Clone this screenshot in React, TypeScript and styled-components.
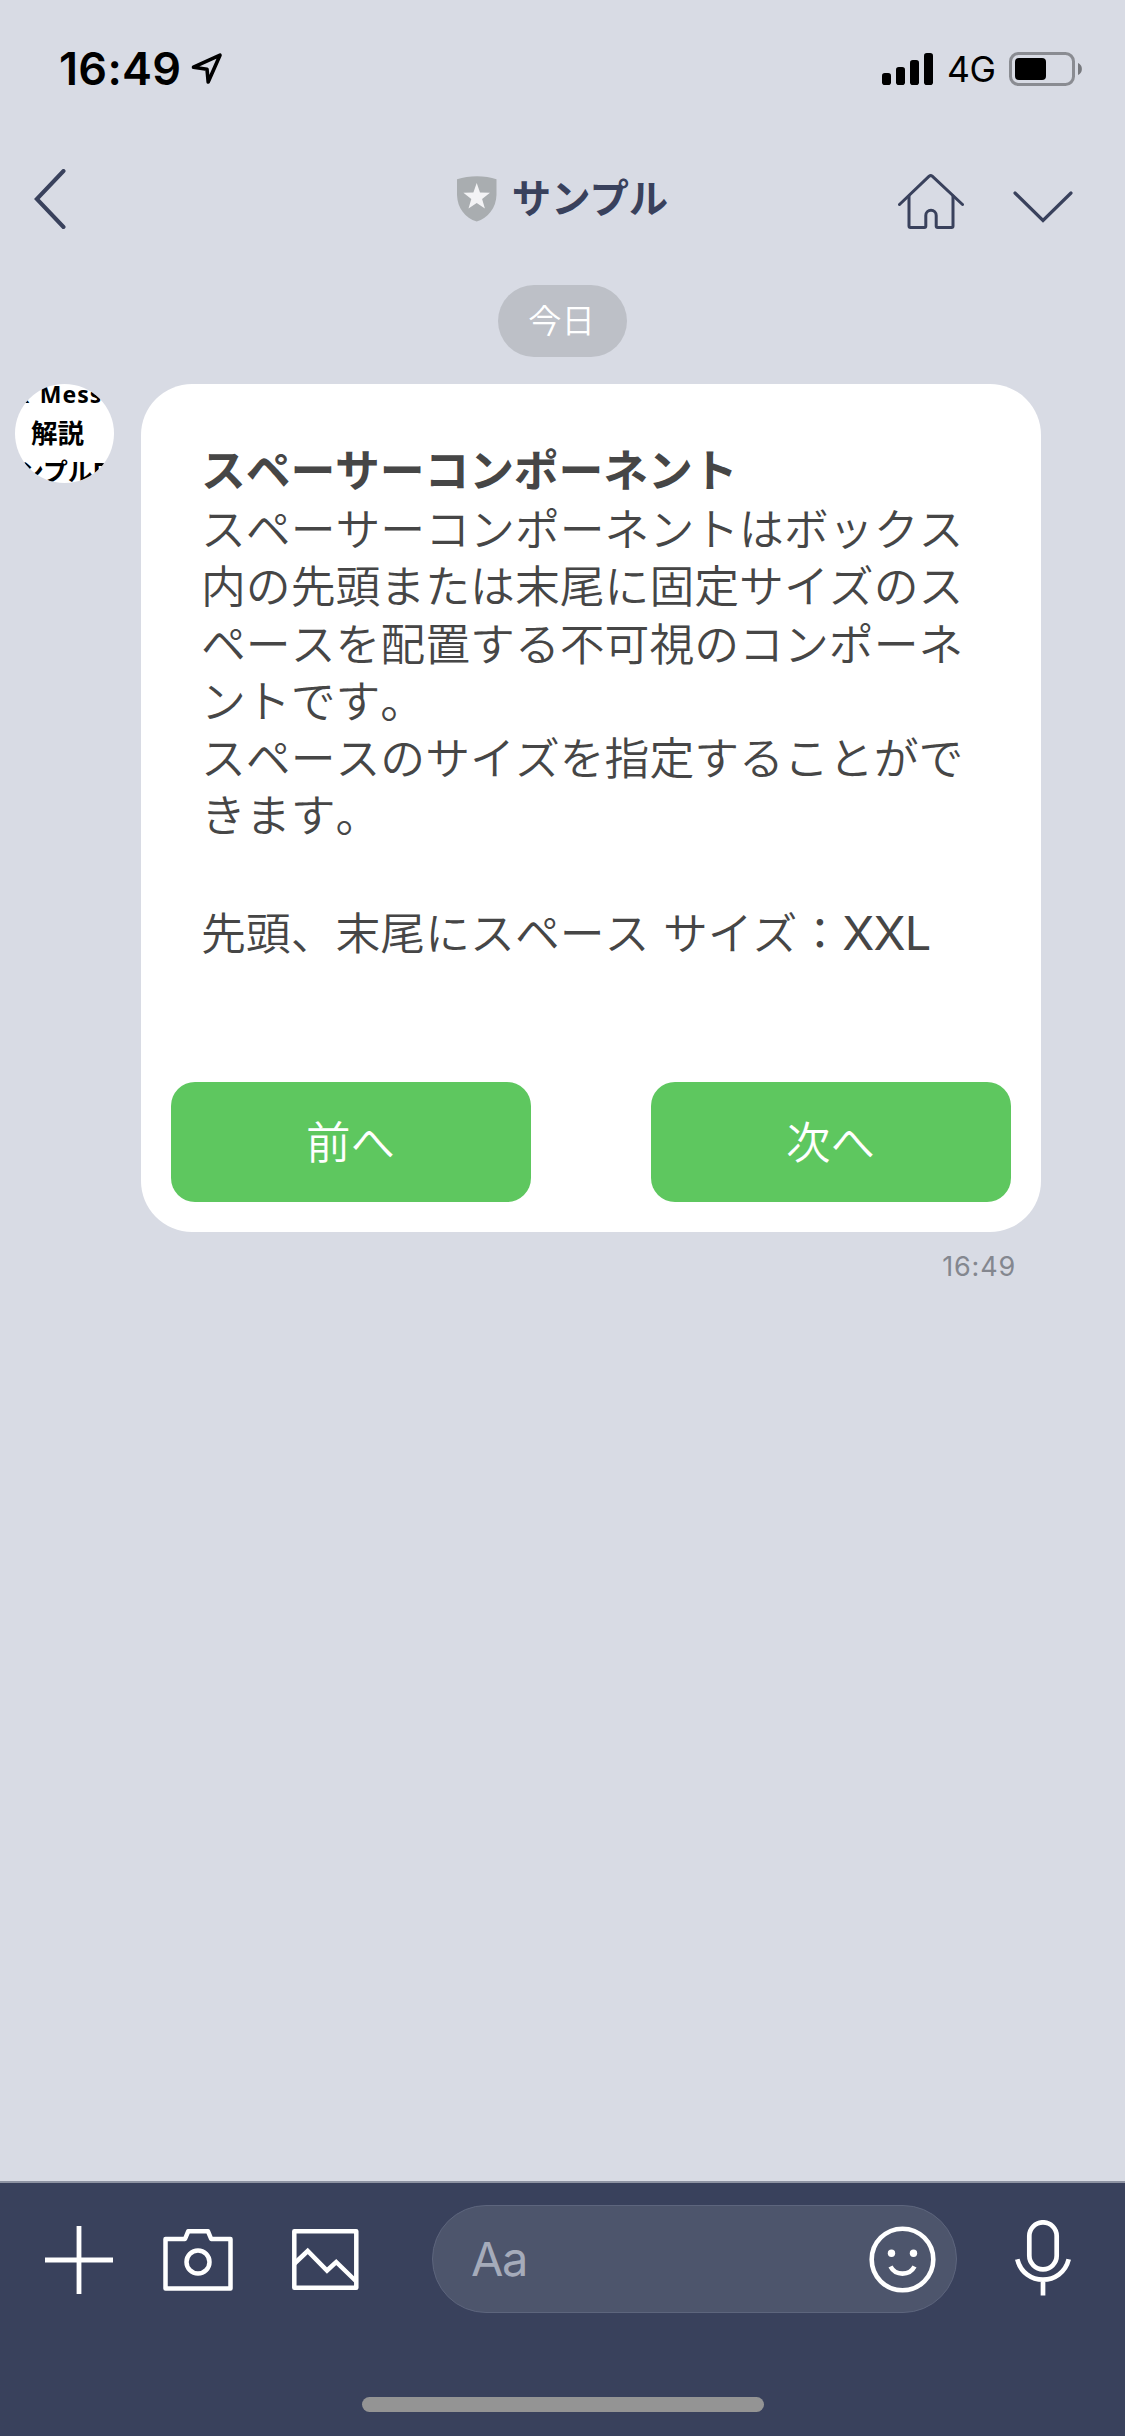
import React from "react";
import styled, { createGlobalStyle } from "styled-components";

const colors = {
  sky: "#d8dbe4",
  navy: "#39415c",
  text: "#464646",
  green: "#5ec75f",
};

const GlobalStyle = createGlobalStyle`
  * { box-sizing: border-box; }
  body {
    margin: 0;
    background: ${colors.sky};
    font-family: Inter, "Noto Sans CJK JP", sans-serif;
  }
  svg { display: block; flex: none; }
`;

const Screen = styled.div`
  width: 1125px;
  height: 2436px;
  display: flex;
  flex-direction: column;
  background: ${colors.sky};
  overflow: hidden;
`;

const StatusBar = styled.div`
  height: 138px;
  padding: 0 43px 0 59px;
  display: flex;
  align-items: center;
  justify-content: space-between;
  color: #000;
`;

const StatusGroup = styled.div<{ $gap: number }>`
  display: flex;
  align-items: center;
  gap: ${(p) => p.$gap}px;
`;

const Clock = styled.span`
  width: 123px;
  font-size: 45px;
  font-weight: 600;
  line-height: 54px;
  letter-spacing: 0.3px;
  white-space: nowrap;
`;

const Network = styled.span`
  width: 48px;
  font-size: 35.5px;
  font-weight: 400;
  line-height: 44px;
  letter-spacing: -0.5px;
  padding-top: 2px;
  white-space: nowrap;
`;

const Header = styled.header`
  height: 122px;
  display: grid;
  grid-template-columns: 1fr auto 1fr;
  align-items: center;
  padding: 0 34px;
`;

const HeaderTitle = styled.h1`
  margin: 0;
  display: flex;
  align-items: center;
  gap: 15px;
  color: ${colors.navy};
  font-size: 39.4px;
  font-weight: 700;
  line-height: 54px;
`;

const HeaderActions = styled.div`
  display: flex;
  align-items: flex-end;
  justify-content: flex-end;
  gap: 49px;
  margin-right: 18px;
  padding-top: 5px;
`;

const ChevronSlot = styled.div`
  padding-bottom: 7px;
`;

const Conversation = styled.main`
  flex: 1;
  display: flex;
  flex-direction: column;
  padding-top: 25px;
`;

const DatePill = styled.div`
  align-self: center;
  width: 129px;
  height: 72px;
  padding: 0 2px 5px 0;
  border-radius: 36px;
  display: flex;
  align-items: center;
  justify-content: center;
  background: #bdc0c7;
  color: #fff;
  font-family: "Noto Sans CJK JP", sans-serif;
  font-size: 33.5px;
  font-weight: 350;
`;

const Message = styled.div`
  display: flex;
  align-items: flex-start;
  gap: 27px;
  margin-top: 27px;
  padding-left: 15px;
`;

const Avatar = styled.div`
  width: 99px;
  height: 99px;
  flex: none;
  border-radius: 50%;
  overflow: hidden;
  background: #fff;
  color: #000;
  font-family: "Noto Sans", "Noto Sans CJK JP", sans-serif;
  font-weight: 700;
`;

const AvatarLine = styled.div<{ $indent: number; $size?: number }>`
  height: 38.5px;
  line-height: 38.5px;
  margin-left: ${(p) => p.$indent}px;
  font-size: ${(p) => p.$size ?? 26.5}px;
  white-space: nowrap;
  &:first-child {
    margin-top: -9px;
    letter-spacing: 1px;
    word-spacing: 2.5px;
  }
`;

const BubbleColumn = styled.div`
  display: flex;
  flex-direction: column;
  width: 900px;
`;

const Bubble = styled.article`
  height: 848px;
  border-radius: 51px;
  background: #fff;
  display: flex;
  flex-direction: column;
  justify-content: space-between;
  padding: 54px 30px 30px;
`;

const BubbleBody = styled.div`
  padding: 0 30px;
  color: ${colors.text};
  font-family: "Noto Sans CJK JP", sans-serif;
  font-size: 44.85px;
  font-weight: 350;
  font-kerning: none;
  line-height: 57.3px;
`;

const BubbleTitle = styled.h2`
  margin: 0;
  font-size: inherit;
  font-weight: 700;
  line-height: 60px;
  letter-spacing: -0.15px;
`;

const Paragraph = styled.p<{ $spaced?: boolean }>`
  margin: ${(p) => (p.$spaced ? "60px" : "0")} 0 0;
  white-space: nowrap;
  word-spacing: 3.5px;
`;

const Latin = styled.span`
  font-family: Inter, sans-serif;
  font-weight: 400;
  font-size: 47px;
  letter-spacing: -0.9px;
`;

const BubbleFooter = styled.div`
  display: flex;
  justify-content: space-between;
`;

const BubbleButton = styled.button`
  width: 360px;
  height: 120px;
  padding: 0 1px 5px 0;
  border: 0;
  border-radius: 24px;
  background: ${colors.green};
  color: #fff;
  font-family: "Noto Sans CJK JP", sans-serif;
  font-size: 44.5px;
  font-weight: 350;
`;

const Timestamp = styled.time`
  align-self: flex-end;
  margin: 17px 25px 0 0;
  color: #84878f;
  font-size: 27px;
  line-height: 36px;
  letter-spacing: 0.8px;
`;

const Composer = styled.footer`
  height: 255px;
  display: flex;
  flex-direction: column;
  justify-content: space-between;
  align-items: center;
  border-top: 2px solid #8e93a3;
  background: ${colors.navy};
  padding: 22px 0 24px;
`;

const ComposerRow = styled.div`
  width: 100%;
  height: 108px;
  display: flex;
  align-items: center;
  padding: 0 54px 0 44px;
  color: #fff;
`;

const Tools = styled.div`
  display: flex;
  align-items: center;
  width: 388px;
  padding-top: 1px;
`;

const ToolIcon = styled.div<{ $before?: number }>`
  margin-left: ${(p) => p.$before ?? 0}px;
`;

const Field = styled.div`
  width: 525px;
  height: 108px;
  display: flex;
  align-items: center;
  justify-content: space-between;
  padding: 0 20px 0 38px;
  border: 1px solid #5d657d;
  border-radius: 54px;
  background: #4d556c;
`;

const Placeholder = styled.span`
  color: #a5abba;
  font-size: 47px;
  line-height: 60px;
  letter-spacing: -1.5px;
`;

const HomeIndicator = styled.div`
  width: 402px;
  height: 15px;
  border-radius: 8px;
  background: #949494;
`;

const LocationArrow = () => (
  <svg width="32" height="34" viewBox="0 0 32 34" fill="none" stroke="#000" strokeWidth="3.6" strokeLinejoin="round">
    <path d="M2.5 15.2 29 3.2 17.2 30 16 17.2Z" />
  </svg>
);

const SignalBars = () => (
  <svg width="51" height="32" viewBox="0 0 51 32" fill="#000">
    <rect x="0" y="20" width="9" height="12" rx="2.8" />
    <rect x="14" y="14" width="9" height="18" rx="2.8" />
    <rect x="28" y="7" width="9" height="25" rx="2.8" />
    <rect x="42" y="0" width="9" height="32" rx="2.8" />
  </svg>
);

const Battery = () => (
  <svg width="73" height="34" viewBox="0 0 73 34">
    <rect x="1.5" y="1.5" width="63" height="31" rx="8" fill="none" stroke="#8a8c92" strokeWidth="3" />
    <rect x="6" y="6" width="31" height="22" rx="4" fill="#000" />
    <path d="M69 11c5.200 1.800 5.200 10.200 0 12Z" fill="#77797e" />
  </svg>
);

const BackIcon = () => (
  <svg width="34" height="60" viewBox="0 0 34 60" fill="none" stroke={colors.navy} strokeWidth="4" strokeLinecap="round">
    <path d="M29.500 2 2.800 30 29.500 58" />
  </svg>
);

const ShieldIcon = () => (
  <svg width="40" height="46" viewBox="0 0 40 46">
    <path d="M0 3.200C12-.7 28-.7 39.500 3.200V19C39 32 31 42 19.700 45.500 8 42 .5 32 0 19Z" fill="#a9adb0" />
    <path d="m19.700 7 3.300 9.500 10 .3-7.900 6.200 2.800 9.600-8.200-5.700-8.200 5.700 2.800-9.600-7.900-6.200 10-.3Z" fill="#f3f3f5" />
  </svg>
);

const HomeIcon = () => (
  <svg width="66" height="56" viewBox="0 0 66 56" fill="none" stroke={colors.navy} strokeWidth="3" strokeLinecap="round" strokeLinejoin="round">
    <path d="M1.500 30.500 31.200 2.200q1.500-1.200 3 0L64.500 30.500" />
    <path d="M11 22V52q0 1.500 1.500 1.500H26.300q1.500 0 1.500-1.500V41.500a5.200 5.200 0 0 1 10.400 0V52q0 1.500 1.500 1.500H53.500q1.500 0 1.500-1.500V22" />
  </svg>
);

const ChevronDownIcon = () => (
  <svg width="60" height="32" viewBox="0 0 60 32" fill="none" stroke={colors.navy} strokeWidth="3.200" strokeLinecap="round">
    <path d="M2 2 30 29.500 58 2" />
  </svg>
);

const PlusIcon = () => (
  <svg width="70" height="70" viewBox="0 0 70 70" stroke="#fff" strokeWidth="4.800">
    <path d="M35 1V69M1 35H69" />
  </svg>
);

const CameraIcon = () => (
  <svg width="70" height="62" viewBox="0 0 70 62" fill="none" stroke="#fff" strokeWidth="4.500" strokeLinejoin="round">
    <path d="M2.500 10H22l3.200-7.700H45L48.200 10H67.500V59.500H2.500Z" />
    <circle cx="35" cy="33" r="11.500" />
  </svg>
);

const PictureIcon = () => (
  <svg width="67" height="61" viewBox="0 0 67 61" fill="none" stroke="#fff" strokeWidth="4.500">
    <rect x="2.300" y="2.300" width="62" height="56.400" strokeLinejoin="round" />
    <path d="M2.500 34.500 15.700 22 35 41.500 44.200 33 64.300 52.500" />
  </svg>
);

const SmileIcon = () => (
  <svg width="67" height="67" viewBox="0 0 67 67" fill="none" stroke="#fff" strokeWidth="4.600">
    <circle cx="33.500" cy="33.500" r="30.800" />
    <path d="M21.500 40.500C26.500 50 40.500 50 45.500 40.500" />
    <circle cx="22.500" cy="27.300" r="3.700" fill="#fff" stroke="none" />
    <circle cx="44.500" cy="27.300" r="3.700" fill="#fff" stroke="none" />
  </svg>
);

const MicIcon = () => (
  <svg width="56" height="78" viewBox="0 0 56 78" fill="none" stroke="#fff" strokeWidth="4.700">
    <rect x="14.300" y="2.300" width="27.400" height="47" rx="13.700" />
    <path d="M2.300 39.300C9 66.500 47 66.500 53.700 39.300M28 59V75.500" />
  </svg>
);

export default function App() {
  return (
    <>
      <GlobalStyle />
      <Screen>
        <StatusBar>
          <StatusGroup $gap={9}>
            <Clock>16:49</Clock>
            <LocationArrow />
          </StatusGroup>
          <StatusGroup $gap={14}>
            <SignalBars />
            <Network>4G</Network>
            <Battery />
          </StatusGroup>
        </StatusBar>

        <Header>
          <BackIcon />
          <HeaderTitle>
            <ShieldIcon />
            サンプル
          </HeaderTitle>
          <HeaderActions>
            <HomeIcon />
            <ChevronSlot>
              <ChevronDownIcon />
            </ChevronSlot>
          </HeaderActions>
        </Header>

        <Conversation>
          <DatePill>今日</DatePill>
          <Message>
            <Avatar>
              <AvatarLine $indent={1} $size={23}>x Mess</AvatarLine>
              <AvatarLine $indent={16}>解説</AvatarLine>
              <AvatarLine $indent={4} $size={24.8}>ンプルB</AvatarLine>
            </Avatar>
            <BubbleColumn>
              <Bubble>
                <BubbleBody>
                  <BubbleTitle>スペーサーコンポーネント</BubbleTitle>
                  <Paragraph>
                    スペーサーコンポーネントはボックス
                    <br />
                    内の先頭または末尾に固定サイズのス
                    <br />
                    ペースを配置する不可視のコンポーネ
                    <br />
                    ントです。
                    <br />
                    スペースのサイズを指定することがで
                    <br />
                    きます。
                  </Paragraph>
                  <Paragraph $spaced>
                    先頭、末尾にスペース サイズ：<Latin>XXL</Latin>
                  </Paragraph>
                </BubbleBody>
                <BubbleFooter>
                  <BubbleButton>前へ</BubbleButton>
                  <BubbleButton>次へ</BubbleButton>
                </BubbleFooter>
              </Bubble>
              <Timestamp>16:49</Timestamp>
            </BubbleColumn>
          </Message>
        </Conversation>

        <Composer>
          <ComposerRow>
            <Tools>
              <ToolIcon><PlusIcon /></ToolIcon>
              <ToolIcon $before={49}><CameraIcon /></ToolIcon>
              <ToolIcon $before={59}><PictureIcon /></ToolIcon>
            </Tools>
            <Field>
              <Placeholder>Aa</Placeholder>
              <SmileIcon />
            </Field>
            <ToolIcon $before={58}><MicIcon /></ToolIcon>
          </ComposerRow>
          <HomeIndicator />
        </Composer>
      </Screen>
    </>
  );
}
